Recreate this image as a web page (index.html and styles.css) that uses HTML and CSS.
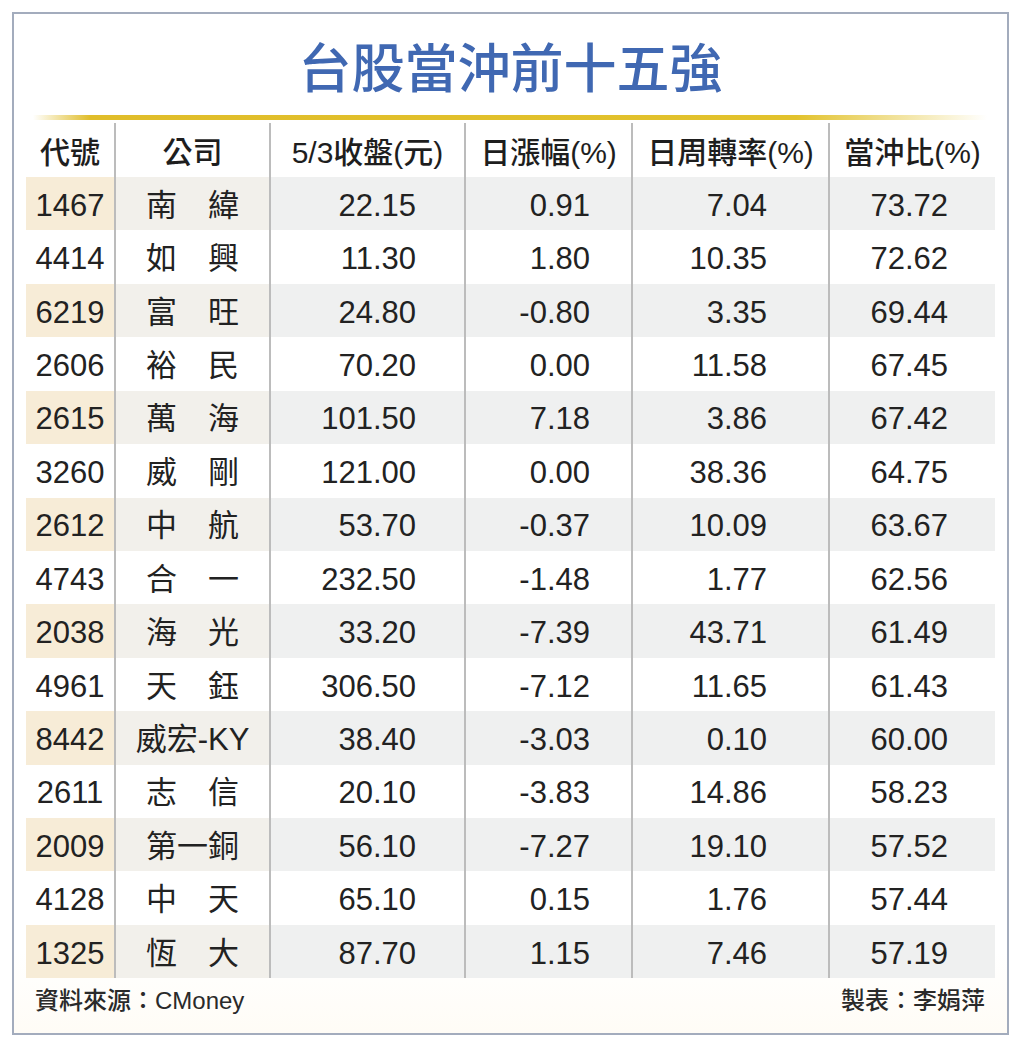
FILE: index.html
```html
<!DOCTYPE html>
<html lang="zh-Hant">
<head>
<meta charset="utf-8">
<title>台股當沖前十五強</title>
<link rel="stylesheet" href="styles.css">
</head>
<body>
<div class="frame">
  <h1 class="title">台股當沖前十五強</h1>
  <div class="goldline"></div>
  <table class="grid">
    <colgroup>
      <col class="c1"><col class="c2"><col class="c3"><col class="c4"><col class="c5"><col class="c6">
    </colgroup>
    <thead>
      <tr><th>代號</th><th>公司</th><th>5/3收盤(元)</th><th>日漲幅(%)</th><th>日周轉率(%)</th><th>當沖比(%)</th></tr>
    </thead>
    <tbody>
      <tr class="alt"><td>1467</td><td>南　緯</td><td>22.15</td><td>0.91</td><td>7.04</td><td>73.72</td></tr>
      <tr><td>4414</td><td>如　興</td><td>11.30</td><td>1.80</td><td>10.35</td><td>72.62</td></tr>
      <tr class="alt"><td>6219</td><td>富　旺</td><td>24.80</td><td>-0.80</td><td>3.35</td><td>69.44</td></tr>
      <tr><td>2606</td><td>裕　民</td><td>70.20</td><td>0.00</td><td>11.58</td><td>67.45</td></tr>
      <tr class="alt"><td>2615</td><td>萬　海</td><td>101.50</td><td>7.18</td><td>3.86</td><td>67.42</td></tr>
      <tr><td>3260</td><td>威　剛</td><td>121.00</td><td>0.00</td><td>38.36</td><td>64.75</td></tr>
      <tr class="alt"><td>2612</td><td>中　航</td><td>53.70</td><td>-0.37</td><td>10.09</td><td>63.67</td></tr>
      <tr><td>4743</td><td>合　一</td><td>232.50</td><td>-1.48</td><td>1.77</td><td>62.56</td></tr>
      <tr class="alt"><td>2038</td><td>海　光</td><td>33.20</td><td>-7.39</td><td>43.71</td><td>61.49</td></tr>
      <tr><td>4961</td><td>天　鈺</td><td>306.50</td><td>-7.12</td><td>11.65</td><td>61.43</td></tr>
      <tr class="alt"><td>8442</td><td>威宏-KY</td><td>38.40</td><td>-3.03</td><td>0.10</td><td>60.00</td></tr>
      <tr><td>2611</td><td>志　信</td><td>20.10</td><td>-3.83</td><td>14.86</td><td>58.23</td></tr>
      <tr class="alt"><td>2009</td><td>第一銅</td><td>56.10</td><td>-7.27</td><td>19.10</td><td>57.52</td></tr>
      <tr><td>4128</td><td>中　天</td><td>65.10</td><td>0.15</td><td>1.76</td><td>57.44</td></tr>
      <tr class="alt"><td>1325</td><td>恆　大</td><td>87.70</td><td>1.15</td><td>7.46</td><td>57.19</td></tr>
    </tbody>
  </table>
  <div class="footer">
    <span>資料來源：CMoney</span>
    <span>製表：李娟萍</span>
  </div>
</div>
</body>
</html>
```

FILE: styles.css
```css
html, body {
  margin: 0;
  padding: 0;
  background: #ffffff;
}

body {
  font-family: "Liberation Sans", "Noto Sans CJK TC", sans-serif;
  color: #222222;
}

.frame {
  box-sizing: border-box;
  margin: 12px 0 0 12px;
  width: 997px;
  height: 1023px;
  border: 2px solid #a3acbd;
  padding: 0 12px;
  background: linear-gradient(to bottom, #ffffff 0%, #ffffff 92%, #fffcf6 100%);
}

.title {
  margin: 0;
  padding-top: 19px;
  height: 64px;
  line-height: 64px;
  text-align: center;
  font-family: "Noto Sans CJK TC", sans-serif;
  font-weight: 500;
  font-size: 53px;
  color: #4068b2;
  letter-spacing: 0;
}

.goldline {
  margin: 18px 8px 0 7px;
  height: 5px;
  background: linear-gradient(to right, rgba(226, 190, 40, 0) 0%, #e0bd2a 6%, #e2c22c 80%, rgba(226, 190, 40, 0) 100%);
}

.grid {
  margin-top: 3px;
  width: 969px;
  table-layout: fixed;
  border-collapse: collapse;
  border-spacing: 0;
}

.c1 { width: 89px; }
.c2 { width: 155px; }
.c3 { width: 195px; }
.c4 { width: 167px; }
.c5 { width: 197px; }
.c6 { width: 166px; }

.grid th,
.grid td {
  padding: 0;
  white-space: nowrap;
  vertical-align: middle;
}

.grid th + th,
.grid td + td {
  border-left: 2px solid #bcbcbc;
}

.grid th {
  height: 54px;
  font-size: 30px;
  font-weight: 500;
  text-align: center;
  color: #1e1e1e;
}

.grid td {
  height: 49.43px;
  padding-top: 4px;
  font-size: 31px;
  font-weight: 400;
  color: #222222;
}

.grid td:nth-child(1) {
  text-align: center;
}

.grid td:nth-child(2) {
  text-align: center;
  height: 50.43px;
  padding-top: 0;
  padding-bottom: 3px;
}

.grid td:nth-child(3) { text-align: right; padding-right: 48px; }
.grid td:nth-child(4) { text-align: right; padding-right: 41px; }
.grid td:nth-child(5) { text-align: right; padding-right: 61px; }
.grid td:nth-child(6) { text-align: right; padding-right: 47px; }

.grid tr.alt td { background: #eff0f0; }
.grid tr.alt td:nth-child(1) { background: #f7ecd7; }
.grid tr.alt td:nth-child(2) { background: #f2f0eb; }

.footer {
  display: flex;
  justify-content: space-between;
  margin-top: 8px;
  padding: 0 10px 0 9px;
  font-size: 24px;
  line-height: 30px;
  font-weight: 500;
  color: #2a2a2a;
}
```
